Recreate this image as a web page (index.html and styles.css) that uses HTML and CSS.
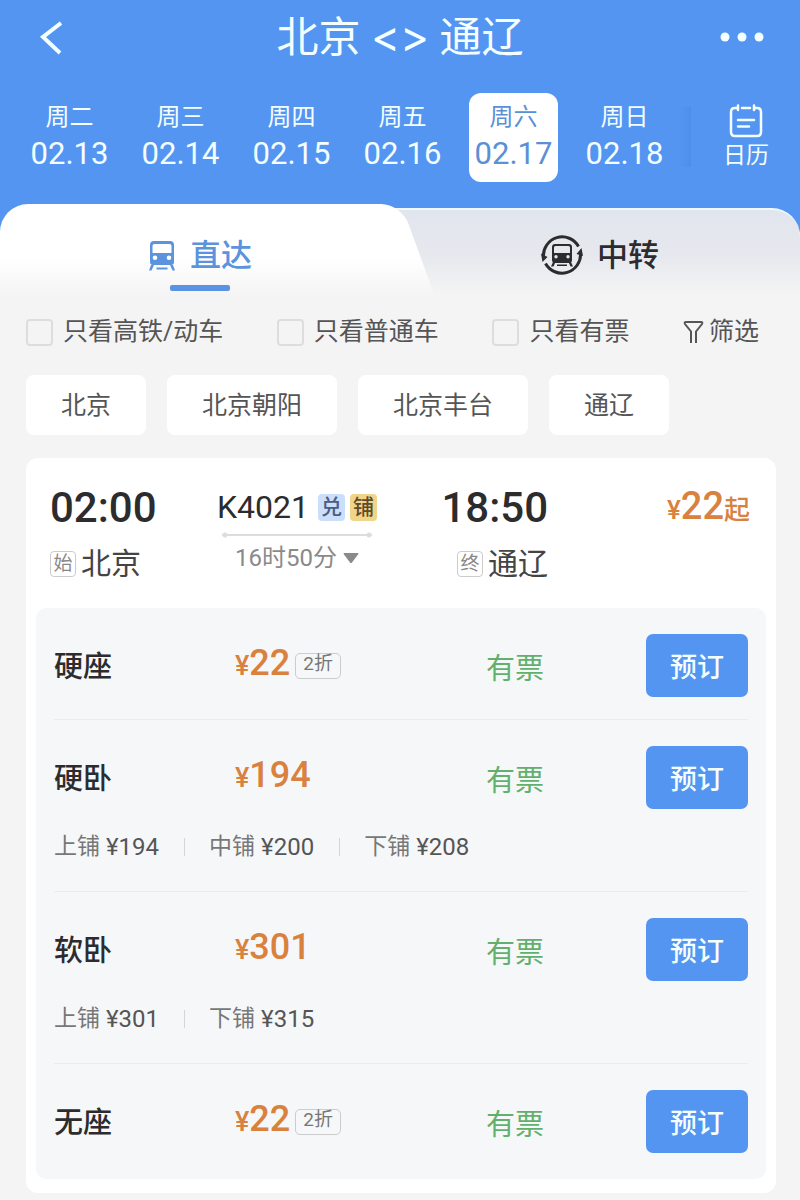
FILE: index.html
```html
<!DOCTYPE html>
<html lang="zh-CN">
<head>
    <meta charset="UTF-8">
    <meta name="viewport" content="width=device-width, initial-scale=1.0">
    <title>北京 - 通辽</title>

    <link rel="stylesheet" href="styles.css">
</head>
<body>
    <header class="header">
        <div class="topbar">
            <button class="icon-button" type="button" aria-label="返回">
                <svg width="26" height="36" viewBox="0 0 26 36" fill="none" stroke="currentColor" stroke-width="4"><path d="M25 3L7 17L24 33"/></svg>
            </button>

            <h1 class="title">北京 <span class="title-arrows">&lt;&gt;</span> 通辽</h1>

            <button class="icon-button icon-button-more" type="button" aria-label="更多">
                <svg width="44" height="12" viewBox="0 0 44 12" fill="currentColor"><circle cx="5" cy="5" r="4.500"/><circle cx="22" cy="5" r="4.500"/><circle cx="39" cy="5" r="4.500"/></svg>
            </button>
        </div>

        <div class="calendar">
            <div class="dates">
                <button class="date" type="button"><span class="date-week">周二</span>02.13</button>
                <button class="date" type="button"><span class="date-week">周三</span>02.14</button>
                <button class="date" type="button"><span class="date-week">周四</span>02.15</button>
                <button class="date" type="button"><span class="date-week">周五</span>02.16</button>
                <button class="date date-active" type="button"><span class="date-week">周六</span>02.17</button>
                <button class="date" type="button"><span class="date-week">周日</span>02.18</button>
            </div>

            <button class="calendar-open" type="button">
                <svg width="34" height="34" viewBox="0 0 34 34" fill="none" stroke="currentColor" stroke-width="2.500" stroke-linecap="round">
                    <path d="M9 4H6Q2 4 2 8V28Q2 32 6 32H28Q32 32 32 28V8Q32 4 28 4H25M9 1.500V6M25 1.500V6M13 4H21M9 16H25M9 22.500H20"/>
                </svg>
                日历
            </button>
        </div>
    </header>

    <main>
        <div class="tabs" role="tablist">
            <button class="tab tab-active" type="button" role="tab" aria-selected="true">
                <svg class="tab-icon" width="28" height="31" viewBox="0 0 28 31" fill="currentColor">
                    <path fill-rule="evenodd" d="M6 1H22Q26 1 26 5V22Q26 25 23 25H5Q2 25 2 22V5Q2 1 6 1ZM6.500 4Q4.500 4 4.500 6V13H23.500V6Q23.500 4 21.500 4ZM7 15.500A2.300 2.300 0 1 0 7 20.100A2.300 2.300 0 1 0 7 15.500ZM21 15.500A2.300 2.300 0 1 0 21 20.100A2.300 2.300 0 1 0 21 15.500Z"/>
                    <path d="M3 25H6L3.500 30.500H1ZM22 25H25L27 30.500H24.500ZM8.500 27.500H19.500V29.500H8.500Z"/>
                </svg>
                直达
            </button>
            <button class="tab tab-transfer" type="button" role="tab" aria-selected="false">
                <svg class="tab-icon" width="42" height="42" viewBox="0 0 42 42" fill="currentColor">
                    <path d="M2.500 23A18.700 18.700 0 0 1 37.500 12.500M39.500 19A18.700 18.700 0 0 1 4.500 29.500" fill="none" stroke="currentColor" stroke-width="3"/>
                    <path d="M0 19.500L6.500 23L1.500 28ZM42 22L35.500 20L40.500 14Z"/>
                    <path fill-rule="evenodd" d="M14 10H28Q31 10 31 13V26Q31 29 28 29H14Q11 29 11 26V13Q11 10 14 10ZM14.500 12Q13 12 13 13.500V19H29V13.500Q29 12 27.500 12ZM15 21A1.700 1.700 0 1 0 15 24.400A1.700 1.700 0 1 0 15 21ZM27 21A1.700 1.700 0 1 0 27 24.400A1.700 1.700 0 1 0 27 21Z"/>
                    <path d="M12 28H14.500L12.500 32.500H10ZM27.500 28H30L32 32.500H29.500ZM16 30.500H26V32H16Z"/>
                </svg>
                中转
            </button>
        </div>

        <div class="filters">
            <label class="check"><input class="check-box" type="checkbox">只看高铁/动车</label>
            <label class="check"><input class="check-box" type="checkbox">只看普通车</label>
            <label class="check"><input class="check-box" type="checkbox">只看有票</label>
            <button class="filter-open" type="button">
                <svg width="21" height="25" viewBox="0 0 21 25" fill="none" stroke="currentColor" stroke-width="2"><path d="M8 23V11.500L2 4Q1 2 3 2H18Q20 2 19 4L13 11.500V23"/></svg>
                筛选
            </button>
        </div>

        <div class="stations">
            <button class="station" type="button">北京</button>
            <button class="station" type="button">北京朝阳</button>
            <button class="station" type="button">北京丰台</button>
            <button class="station" type="button">通辽</button>
        </div>

        <section class="train">
            <div class="summary">
                <div class="stop">
                    <div class="stop-time">02:00</div>
                    <div class="stop-name"><span class="stop-tag">始</span>北京</div>
                </div>

                <div class="route">
                    <div class="route-number">K4021<span class="badge badge-blue">兑</span><span class="badge badge-gold">铺</span></div>
                    <div class="route-line"></div>
                    <button class="route-duration" type="button">
                        16时50分
                        <svg width="16" height="12" viewBox="0 0 16 12" fill="currentColor"><path d="M1 1H15Q16 1 15 2.500L9 10.500Q8 11.500 7 10.500L1 2.500Q0 1 1 1Z"/></svg>
                    </button>
                </div>

                <div class="stop stop-end">
                    <div class="stop-time">18:50</div>
                    <div class="stop-name"><span class="stop-tag">终</span>通辽</div>
                </div>

                <div class="from-price"><span class="from-price-unit">¥</span>22<span class="from-price-unit">起</span></div>
            </div>

            <ul class="seats">
                <li class="seat">
                    <div class="seat-row">
                        <span class="seat-name">硬座</span>
                        <span class="seat-price"><span class="seat-currency">¥</span>22<span class="discount">2折</span></span>
                        <span class="seat-status">有票</span>
                        <button class="book" type="button">预订</button>
                    </div>
                </li>

                <li class="seat">
                    <div class="seat-row">
                        <span class="seat-name">硬卧</span>
                        <span class="seat-price"><span class="seat-currency">¥</span>194</span>
                        <span class="seat-status">有票</span>
                        <button class="book" type="button">预订</button>
                    </div>
                    <ul class="berths">
                        <li class="berth">上铺 <span class="berth-price">¥194</span></li>
                        <li class="berth">中铺 <span class="berth-price">¥200</span></li>
                        <li class="berth">下铺 <span class="berth-price">¥208</span></li>
                    </ul>
                </li>

                <li class="seat">
                    <div class="seat-row">
                        <span class="seat-name">软卧</span>
                        <span class="seat-price"><span class="seat-currency">¥</span>301</span>
                        <span class="seat-status">有票</span>
                        <button class="book" type="button">预订</button>
                    </div>
                    <ul class="berths">
                        <li class="berth">上铺 <span class="berth-price">¥301</span></li>
                        <li class="berth">下铺 <span class="berth-price">¥315</span></li>
                    </ul>
                </li>

                <li class="seat">
                    <div class="seat-row">
                        <span class="seat-name">无座</span>
                        <span class="seat-price"><span class="seat-currency">¥</span>22<span class="discount">2折</span></span>
                        <span class="seat-status">有票</span>
                        <button class="book" type="button">预订</button>
                    </div>
                </li>
            </ul>
        </section>
    </main>
</body>
</html>
```

FILE: styles.css
```css
* {
    box-sizing: border-box;
}

body {
    margin: 0;

    color: #2c2c2e;
    font-family: Roboto, "Noto Sans CJK SC", sans-serif;
    font-size: 25px;

    background-color: #f4f4f4;
}

button {
    margin: 0;
    padding: 0;

    color: inherit;
    font: inherit;

    background: none;
    border: 0;
}

ul {
    margin: 0;
    padding: 0;

    list-style: none;
}

svg {
    display: block;
    flex-shrink: 0;
}

/* header */

.header {
    padding-bottom: 50px;

    color: #f4ffff;

    background-color: #5595f2;
}

.topbar {
    padding: 0 36px;
    height: 75px;

    display: flex;
    justify-content: space-between;
    align-items: center;
}

.icon-button {
    width: 46px;
}

.icon-button-more svg {
    margin-left: auto;
}

.title {
    margin: 0;

    font-size: 42px;
    font-weight: 400;
    line-height: 60px;
}

.title-arrows {
    font-family: Inter, sans-serif;
    font-size: 44px;
    line-height: 44px;
}

.calendar {
    padding: 18px 0 0 14px;

    display: flex;
}

.dates {
    flex-grow: 1;

    display: flex;
    justify-content: space-around;
}

.date {
    padding-bottom: 1px;
    width: 89px;
    height: 89px;

    display: flex;
    flex-direction: column;
    align-items: center;
    justify-content: center;

    font-size: 31px;
    line-height: 40px;

    border-radius: 12px;
}

.date-week {
    font-size: 24px;
    line-height: 34px;
}

.date-active {
    color: #5b8fd6;

    background-color: #fff;
}

.calendar-open {
    padding: 11px 0 0 12px;
    width: 120px;

    display: flex;
    flex-direction: column;
    align-items: center;

    font-size: 23px;
    line-height: 36px;

    background: linear-gradient(to right, #5595f2, #4f8eec) 0 14px / 11px 60px no-repeat;
}

/* tabs */

.tabs {
    margin-top: -28px;
    height: 96px;

    display: flex;
}

.tab {
    position: relative;

    display: flex;
    align-items: center;
    justify-content: center;
    gap: 14px;

    font-size: 31px;
    font-weight: 500;
}

.tab-icon {
    margin-top: 6px;
}

.tab-active {
    z-index: 1;
    padding-top: 4px;
    flex: 0 0 50%;
    height: 92px;

    color: #5b93dd;

    background: linear-gradient(#fff 55px, #f4f4f4 92px) 0 0 / calc(100% - 30px) 100% no-repeat;
    border-radius: 28px 0 0 0;
}

/* slanted right edge of the selected tab */
.tab-active::before {
    content: '';
    position: absolute;
    z-index: -1;
    top: 0;
    right: -18px;
    bottom: 0;
    width: 80px;

    background: linear-gradient(#fff 55px, #f4f4f4 92px);
    border-top-right-radius: 20px;
    transform: skewX(20deg);
}

.tab-active::after {
    content: '';
    position: absolute;
    left: calc(50% - 30px);
    bottom: 5px;
    width: 60px;
    height: 6px;

    background-color: #5b93e4;
    border-radius: 2px;
}

.tab-transfer {
    margin: 4px 0 0 -30px;
    padding: 0 0 4px 30px;
    flex: 1;
    height: 90px;

    background: linear-gradient(#e1e5ed, #e6e8ee 45px, #f4f4f4 84px);
    border-top: 2px solid #eefaff;
    border-top-right-radius: 28px;
}

/* filters */

.filters {
    padding: 12px 41px 0 26px;

    display: flex;
    justify-content: space-between;

    color: #555;
    line-height: 40px;
}

.check,
.filter-open {
    display: flex;
    align-items: center;
}

.check {
    gap: 10px;
}

.filter-open {
    gap: 5px;
}

.check-box {
    margin: 0;
    width: 27px;
    height: 27px;

    appearance: none;
    border: 2px solid #ddd;
    border-radius: 4px;
}

.stations {
    padding: 23px 26px 0;

    display: flex;
    gap: 21px;
}

.station {
    padding: 0 35px 5px;
    height: 60px;

    color: #555;

    background-color: #fff;
    border-radius: 8px;
}

/* train card */

.train {
    margin: 23px 24px 6px 26px;
    padding: 0 10px 14px;

    background-color: #fff;
    border-radius: 12px;
}

.summary {
    padding: 24px 16px 22px 14px;

    display: grid;
    grid-template-columns: 166fr 162fr 170fr 202fr;
}

.stop-end {
    justify-self: end;

    text-align: right;
}

.stop-time {
    font-size: 42px;
    font-weight: 500;
    line-height: 52px;
}

.stop-name {
    padding-top: 8px;

    display: flex;
    align-items: center;
    justify-content: flex-end;
    gap: 5px;

    color: #444;
    font-size: 30px;
    line-height: 44px;
}

.stop:first-child .stop-name {
    justify-content: flex-start;
}

.stop-tag {
    width: 26px;
    height: 26px;

    color: #888;
    font-size: 19px;
    line-height: 24px;
    text-align: center;

    border: 1px solid #ccc;
    border-radius: 4px;
}

.route {
    display: flex;
    flex-direction: column;
    align-items: center;
}

.route-number {
    display: flex;
    align-items: center;
    gap: 5px;

    font-size: 32px;
    line-height: 50px;
}

.badge {
    width: 27px;
    height: 27px;

    color: #4a5b85;
    font-size: 21px;
    font-weight: 500;
    line-height: 26px;
    text-align: center;

    background-color: #cbdefa;
    border-radius: 4px;
}

.badge-blue {
    margin-left: 4px;
}

.badge-gold {
    color: #5d4b2b;

    background-color: #f0d48a;
}

/* thin line with a dot on each end */
.route-line {
    width: 150px;
    height: 6px;

    background:
        radial-gradient(circle at 3px 3px, #ddd 2px, transparent 3px),
        radial-gradient(circle at 147px 3px, #ddd 2px, transparent 3px),
        linear-gradient(#ddd, #ddd) 0 2px / 100% 2px no-repeat;
}

.route-duration {
    padding-top: 2px;

    display: flex;
    align-items: center;
    gap: 6px;

    color: #8a8a8a;
    font-size: 24px;
    line-height: 36px;
}

.from-price {
    color: #d9813f;
    font-size: 38px;
    font-weight: 500;
    line-height: 48px;
    text-align: right;
}

.from-price-unit {
    font-size: 26px;
}

/* seats */

.seats {
    padding: 0 18px;

    background-color: #f6f7f9;
    border-radius: 10px;
}

.seat {
    padding: 26px 0 22px;

    border-bottom: 1px solid #ebecee;
}

.seat:last-child {
    padding-bottom: 26px;

    border-bottom: 0;
}

.seat-row {
    display: grid;
    grid-template-columns: 181fr 251fr 160fr 102px;
    align-items: center;
}

.seat-name {
    padding-bottom: 4px;

    font-size: 29px;
    font-weight: 500;
}

.seat-price {
    padding-bottom: 2px;

    display: flex;
    align-items: baseline;

    color: #d9813f;
    font-size: 36px;
    font-weight: 500;
    line-height: 42px;
}

.seat-currency {
    font-size: 27px;
}

.discount {
    margin: 2px 0 0 5px;
    padding: 0 7px 4px;
    align-self: center;

    color: #777;
    font-size: 19px;
    font-weight: 400;
    line-height: 20px;

    border: 1px solid #ccc;
    border-radius: 5px;
}

.seat-status {
    color: #62b06e;
    font-size: 29px;
}

.book {
    height: 63px;

    color: #f4ffff;
    font-size: 27px;
    font-weight: 500;

    background-color: #5595f2;
    border-radius: 7px;
}

.berths {
    padding: 20px 0 4px;

    display: flex;
}

.berth {
    display: flex;
    align-items: center;
    gap: 6px;

    color: #777;
    font-size: 23px;
    line-height: 36px;
}

.berth + .berth::before {
    content: '';
    margin: 0 18px 0 25px;
    width: 1px;
    height: 18px;

    background-color: #d5d5d8;
}

.berth-price {
    color: #555;
    font-size: 24px;
}
```
